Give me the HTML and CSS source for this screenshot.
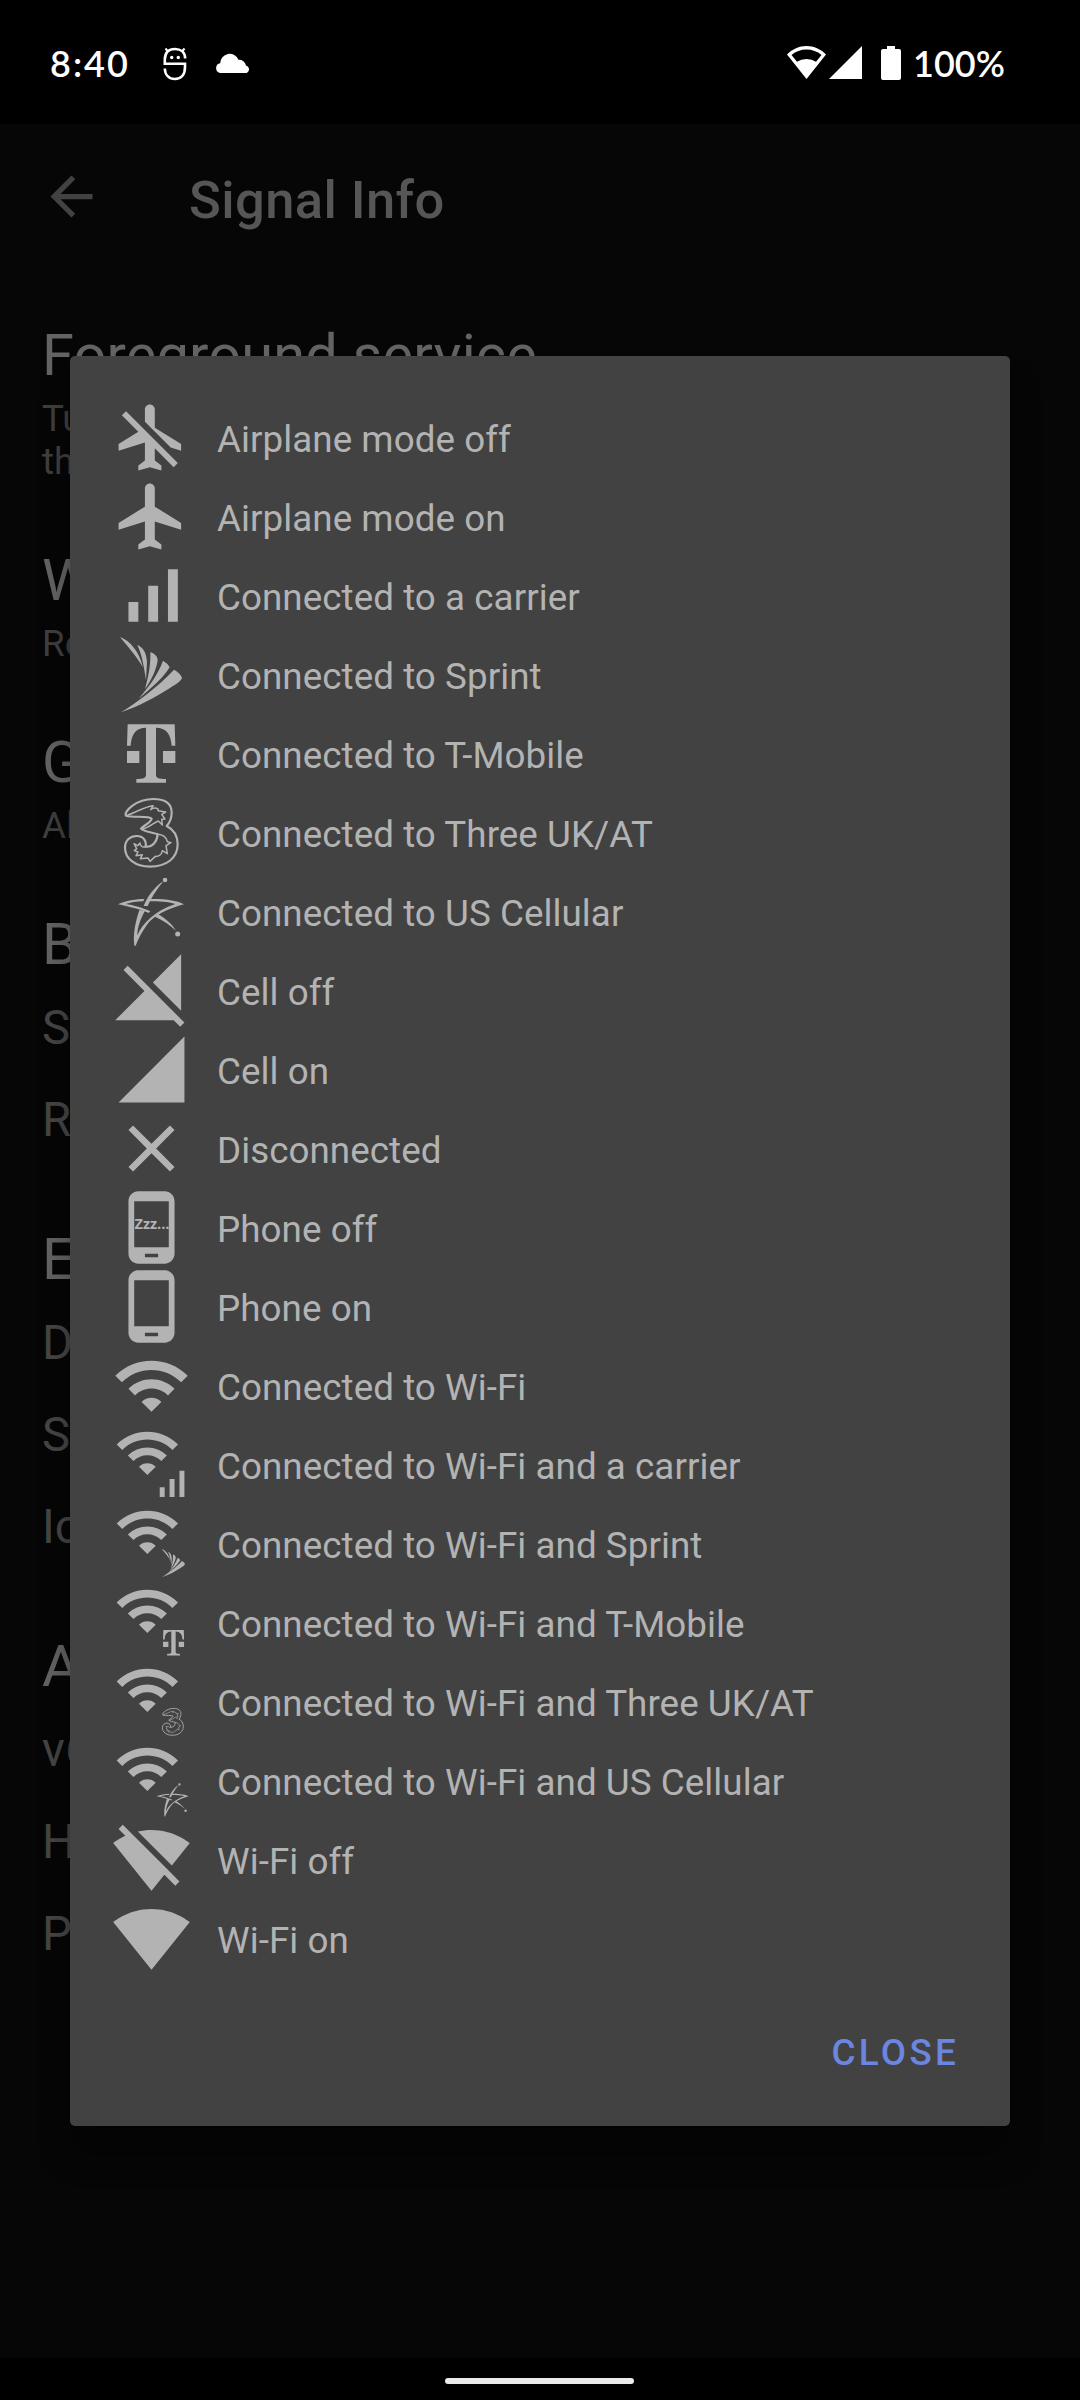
FILE: index.html
```html
<!DOCTYPE html>
<html lang="en">
<head>
<meta charset="utf-8">
<title>Signal Info</title>
<link rel="stylesheet" href="styles.css">
</head>
<body>
<svg class="defs" aria-hidden="true">
  <symbol id="wifi" viewBox="0 0 24 24"><path d="M1,9l2,2c4.97,-4.97 13.03,-4.97 18,0l2,-2C16.93,2.93 7.08,2.93 1,9zM9,17l3,3 3,-3c-1.65,-1.66 -4.34,-1.66 -6,0zM5,13l2,2c2.76,-2.76 7.24,-2.76 10,0l2,-2C15.14,9.14 8.87,9.14 5,13z"/></symbol>
  <symbol id="bars" viewBox="0 0 24 24"><path d="M17,4h3v16h-3zM5,14h3v6H5zM11,9h3v11h-3z"/></symbol>
  <symbol id="phone" viewBox="0 0 24 24"><path d="M16,1L8,1C6.34,1 5,2.34 5,4v16c0,1.66 1.34,3 3,3h8c1.66,0 3,-1.34 3,-3L19,4c0,-1.66 -1.34,-3 -3,-3zM14,21h-4v-1h4v1zM17.25,18L6.75,18L6.75,4h10.5v14z"/></symbol>
  <symbol id="sprint" viewBox="0 0 79 79"><g transform="translate(-22 -245) scale(.33333)">
    <path d="M90 741C120 752 148 785 159 832C144 805 118 775 90 741Z"/>
    <path d="M142 765C160 772 169 790 171 815L168 870C162 835 158 800 142 765Z"/>
    <path d="M181 786C195 792 203 799 203 811C199 840 184 870 165 898C178 850 182 820 181 786Z"/>
    <path d="M219 812Q232 819 239 832C220 862 190 890 146 926C178 888 203 855 219 812Z"/>
    <path d="M252 839C262 844 273 853 276 864C272 874 262 880 240 894C190 925 150 947 93 967C140 937 205 890 252 839Z"/>
  </g></symbol>
  <symbol id="tmobile" viewBox="0 0 79 79"><g transform="translate(-22 -14) scale(.33333)">
    <path d="M113 73H254L256 137H245C242 100 228 84 198 83V224C198 234 206 237 228 237V248H139V237C160 237 168 234 168 224V83C138 84 125 100 122 137H111ZM111 153h37v36h-37zM219 153h37v36h-37z"/>
  </g></symbol>
  <symbol id="three" viewBox="0 0 79 79"><g transform="translate(-22 -93) scale(.33333)" fill="none" stroke="currentColor" stroke-linejoin="round">
    <path stroke-width="6.500" d="M108 347C100 335 138 297 190 297C226 297 245 312 245 338C245 358 237 370 230 378C250 388 263 407 263 433C263 475 228 500 180 500C135 500 105 475 105 443C105 421 121 408 140 408C160 408 170 422 167 440C188 442 201 425 203 403C185 396 160 395 153 386C158 378 184 368 185 356C176 346 130 354 108 347Z"/>
    <path stroke-width="4.500" d="M112 345C135 340 160 320 190 317L182 329C194 321 208 324 204 332L227 336L215 343L225 357L215 358L217 375L205 363C190 368 175 385 156 387M203 403C220 404 229 412 232 425L243 428L228 437L232 461L217 452C215 465 205 470 196 469L180 484L174 474L151 476L157 464L138 467L144 456L133 452L140 446L132 431L143 437L150 429C150 438 158 444 167 440"/>
  </g></symbol>
  <symbol id="uscell" viewBox="0 0 79 79"><g transform="translate(-22 -172) scale(.33333)">
    <path d="M84 613C105 602 140 597 163 597L160 604C140 604 120 608 107 612C130 615 160 624 181 634L176 639C150 628 115 619 84 613ZM181 597C225 596 265 602 282 613C240 624 190 645 170 676C155 697 145 716 137 737H133C128 700 138 660 148 630L164 634C150 660 142 685 142 706C157 670 195 632 256 612C235 605 205 604 179 604Z"/>
    <path d="M217 545C190 565 172 590 161 618L173 618C182 598 196 573 217 548ZM204 642C226 655 246 672 258 692C240 675 220 662 195 650Z"/>
    <circle cx="225" cy="540" r="7"/><circle cx="263" cy="702" r="7.5"/>
  </g></symbol>
</svg>

<div class="screen">
  <header class="status">
    <span class="clock">8:40</span>
    <svg class="st-mask" viewBox="0 0 24 34"><g fill="none" stroke="#fff" stroke-width="2.6"><path d="M22.2 11.5C22 5 17.500 2 12 2S2 5 1.800 12.500V16.800H22V20C22 28 18 32 12 32S2 28 1.800 21.500"/><path stroke-width="2" d="M5 4.500L2.500 1.500M19 4.500L21.500 1.500"/></g><circle cx="8.700" cy="10.500" r="1.700" fill="#fff"/><circle cx="15.300" cy="10.500" r="1.700" fill="#fff"/></svg>
    <svg class="st-cloud" viewBox="0 0 36 20"><path fill="#fff" d="M5 20A5 5 0 0 1 5.200 10.200A9.500 9.500 0 0 1 23.500 6.700A7 7 0 0 1 31 12.500A4 4 0 0 1 31.800 20Z"/></svg>
    <span class="spacer"></span>
    <svg class="st-wifi" viewBox="0 0 39 33"><path fill="#fff" fill-rule="evenodd" d="M0 8.500C5.500 3 12 0 19.500 0S33.500 3 39 8.500L19.500 33ZM4.500 9L10 15.800Q14 13 19.500 13T29 15.800L34.500 9Q28 3.500 19.500 3.500T4.500 9Z"/></svg>
    <svg class="st-cell" viewBox="0 0 33 33"><path fill="#fff" d="M0 33H33V0Z"/></svg>
    <svg class="st-batt" viewBox="0 0 20 34"><path fill="#fff" d="M6 0H14V3H18Q20 3 20 5V32Q20 34 18 34H2Q0 34 0 32V5Q0 3 2 3H6Z"/></svg>
    <span class="pct">100%</span>
  </header>

  <div class="appbar">
    <svg class="back" viewBox="0 0 24 24"><path d="M20,11H7.83l5.59,-5.59L12,4l-8,8 8,8 1.41,-1.41L7.83,13H20v-2z"/></svg>
    <h1 class="title">Signal Info</h1>
  </div>

  <main class="settings">
    <section class="group"><h2 class="head">Foreground service</h2><p class="note">Tu<br>th</p></section>
    <section class="group"><h2 class="head">W</h2><p class="note">Re</p></section>
    <section class="group"><h2 class="head">G</h2><p class="note">Al</p></section>
    <section class="group"><h2 class="head">B</h2><div class="items"><span>S</span><span>R</span></div></section>
    <section class="group"><h2 class="head">E</h2><div class="items"><span>D</span><span>S</span><span>Ic</span></div></section>
    <section class="group"><h2 class="head">A</h2><div class="items"><span>v6</span><span>H</span><span>P</span></div></section>
  </main>

  <footer class="navbar"><span class="handle"></span></footer>

  <div class="dialog" role="dialog">
    <ul class="legend">
      <li><svg class="ic" viewBox="0 0 24 24"><path d="M13,9V3.5C13,2.67 12.33,2 11.5,2S10,2.67 10,3.5v3.68l7.83,7.83L21,16v-2l-8,-5zM3,5.27l4.99,4.99L2,14v2l8,-2.5V19l-2,1.5V22l3.5,-1 3.5,1v-1.5L13,19v-3.73L18.73,21 20,19.73 4.27,4 3,5.27z"/></svg><span>Airplane mode off</span></li>
      <li><svg class="ic" viewBox="0 0 24 24"><path d="M21,16v-2l-8,-5V3.5C13,2.67 12.33,2 11.5,2S10,2.67 10,3.5V9l-8,5v2l8,-2.5V19l-2,1.5V22l3.5,-1 3.5,1v-1.5L13,19v-5.5L21,16z"/></svg><span>Airplane mode on</span></li>
      <li><svg class="ic"><use href="#bars"/></svg><span>Connected to a carrier</span></li>
      <li><svg class="ic"><use href="#sprint"/></svg><span>Connected to Sprint</span></li>
      <li><svg class="ic"><use href="#tmobile"/></svg><span>Connected to T-Mobile</span></li>
      <li><svg class="ic"><use href="#three"/></svg><span>Connected to Three UK/AT</span></li>
      <li><svg class="ic"><use href="#uscell"/></svg><span>Connected to US Cellular</span></li>
      <li><svg class="ic" viewBox="0 0 24 24"><path d="M21,1l-8.59,8.59L21,18.18V1zM4.77,4.5L3.5,5.77l6.36,6.36L1,21h17.73l2,2L22,21.73 4.77,4.5z"/></svg><span>Cell off</span></li>
      <li><svg class="ic" viewBox="0 0 24 24"><path d="M2,22h20V2z"/></svg><span>Cell on</span></li>
      <li><svg class="ic" viewBox="0 0 24 24"><path d="M19,6.41L17.59,5 12,10.59 6.41,5 5,6.41 10.59,12 5,17.59 6.41,19 12,13.41 17.59,19 19,17.59 13.41,12z"/></svg><span>Disconnected</span></li>
      <li><svg class="ic" viewBox="0 0 79 79"><use href="#phone"/><text class="zzz" x="22.500" y="41.300" textLength="35" lengthAdjust="spacingAndGlyphs">Zzz...</text></svg><span>Phone off</span></li>
      <li><svg class="ic"><use href="#phone"/></svg><span>Phone on</span></li>
      <li><svg class="ic"><use href="#wifi"/></svg><span>Connected to Wi-Fi</span></li>
      <li><svg class="ic" viewBox="0 0 79 79"><use href="#wifi" x="1.900" y="-5.700" width="66.900" height="66.900"/><use href="#bars" x="39.500" y="39.200" width="39.500" height="39.500"/></svg><span>Connected to Wi-Fi and a carrier</span></li>
      <li><svg class="ic" viewBox="0 0 79 79"><use href="#wifi" x="1.900" y="-5.700" width="66.900" height="66.900"/><use href="#sprint" x="46.500" y="44" width="29.900" height="29.900"/></svg><span>Connected to Wi-Fi and Sprint</span></li>
      <li><svg class="ic" viewBox="0 0 79 79"><use href="#wifi" x="1.900" y="-5.700" width="66.900" height="66.900"/><use href="#tmobile" x="44.500" y="42.600" width="34.400" height="34.400"/></svg><span>Connected to Wi-Fi and T-Mobile</span></li>
      <li><svg class="ic" viewBox="0 0 79 79"><use href="#wifi" x="1.900" y="-5.700" width="66.900" height="66.900"/><use href="#three" x="45.200" y="44" width="31.400" height="31.400"/></svg><span>Connected to Wi-Fi and Three UK/AT</span></li>
      <li><svg class="ic" viewBox="0 0 79 79"><use href="#wifi" x="1.900" y="-5.700" width="66.900" height="66.900"/><use href="#uscell" x="41.600" y="39.600" width="38.500" height="38.500"/></svg><span>Connected to Wi-Fi and US Cellular</span></li>
      <li><svg class="ic" viewBox="0 0 24 24"><path d="M23.64,7c-0.45,-0.34 -4.93,-4 -11.64,-4 -1.5,0 -2.89,0.19 -4.15,0.48L18.18,13.8 23.64,7zM17.04,15.22L3.27,1.44 2,2.72l2.05,2.06C1.91,5.76 0.59,6.82 0.36,7l11.63,14.49 0.01,0.01 0.01,-0.01 3.9,-4.86 3.32,3.32 1.27,-1.27 -3.46,-3.46z"/></svg><span>Wi-Fi off</span></li>
      <li><svg class="ic" viewBox="0 0 24 24"><path d="M12.01,21.49L23.64,7c-0.45,-0.34 -4.93,-4 -11.64,-4C5.28,3 0.81,6.66 0.36,7l11.63,14.49 0.01,0.01 0.01,-0.01z"/></svg><span>Wi-Fi on</span></li>
    </ul>
    <div class="actions"><button class="close">CLOSE</button></div>
  </div>
</div>
</body>
</html>
```
FILE: styles.css
```css
* { box-sizing: border-box; }
body { margin: 0; background: #000; font-family: Roboto, sans-serif; }
h1, h2, p, ul { margin: 0; padding: 0; font-weight: 400; }
svg { display: block; flex: none; overflow: visible; }
.defs { position: absolute; width: 0; height: 0; }

.screen {
  position: relative;
  display: flex;
  flex-direction: column;
  width: 1080px;
  height: 2400px;
  overflow: hidden;
  background: #060606;
}

.status {
  display: flex;
  align-items: center;
  height: 124px;
  padding: 2px 75px 0 50px;
  background: #000;
  color: #fff;
  font: 600 36px/122px Lato, sans-serif;
}
.clock { width: 113px; letter-spacing: 2px; }
.pct { width: 92px; }
.spacer { flex: 1; }
.st-mask { width: 24px; height: 34px; margin-top: 2px; }
.st-cloud { width: 36px; height: 20px; margin-left: 28px; }
.st-wifi { width: 39px; height: 33px; margin-bottom: 2px; }
.st-cell { width: 33px; height: 33px; margin: 0 0 2px 3px; }
.st-batt { width: 20px; height: 34px; margin: 0 12px 1px 19px; }

.appbar {
  display: flex;
  align-items: center;
  height: 144px;
  padding-left: 40px;
}
.back { width: 63px; height: 63px; fill: #424242; }
.title {
  margin: 7px 0 0 86px;
  font-size: 52.5px;
  font-weight: 500;
  line-height: 62px;
  letter-spacing: .4px;
  color: #565656;
}

.settings { flex: 1; padding: 53px 42px 0; }
.group { margin-bottom: 63px; }
.group:nth-child(n+4) { margin-bottom: 60px; }
.head { font-size: 57.75px; line-height: 68px; letter-spacing: .15px; color: #636363; }
.note { margin-top: 8px; font-size: 36.75px; line-height: 43px; color: #3f3f3f; }
.items {
  display: flex;
  flex-direction: column;
  margin: 4px 0 -1px;
  font-size: 47.25px;
  line-height: 92px;
  color: #454545;
}

.navbar { display: flex; justify-content: center; height: 42px; padding: 20px 1px 0 0; background: #000; }
.handle { width: 189px; height: 6px; border-radius: 3px; background: #ebebeb; }

.dialog {
  position: absolute;
  left: 70px;
  top: 356px;
  width: 940px;
  height: 1770px;
  padding: 42px;
  border-radius: 5px;
  background: #424242;
  box-shadow: 0 30px 30px rgba(0, 0, 0, .35);
}
.legend { list-style: none; color: #b3b3b3; }
.legend li { display: flex; height: 79px; font-size: 36.75px; line-height: 84px; letter-spacing: .06px; }
.ic { width: 79px; height: 79px; margin-right: 26px; fill: currentColor; }
.zzz { font: 700 14.5px "Open Sans", sans-serif; letter-spacing: 0; }
.actions { display: flex; justify-content: flex-end; margin-top: 45px; }
.close {
  padding: 0 9px;
  border: 0;
  background: none;
  color: #6b86e0;
  font: 500 36.75px/60px Roboto, sans-serif;
  letter-spacing: 3.28px;
}
```
